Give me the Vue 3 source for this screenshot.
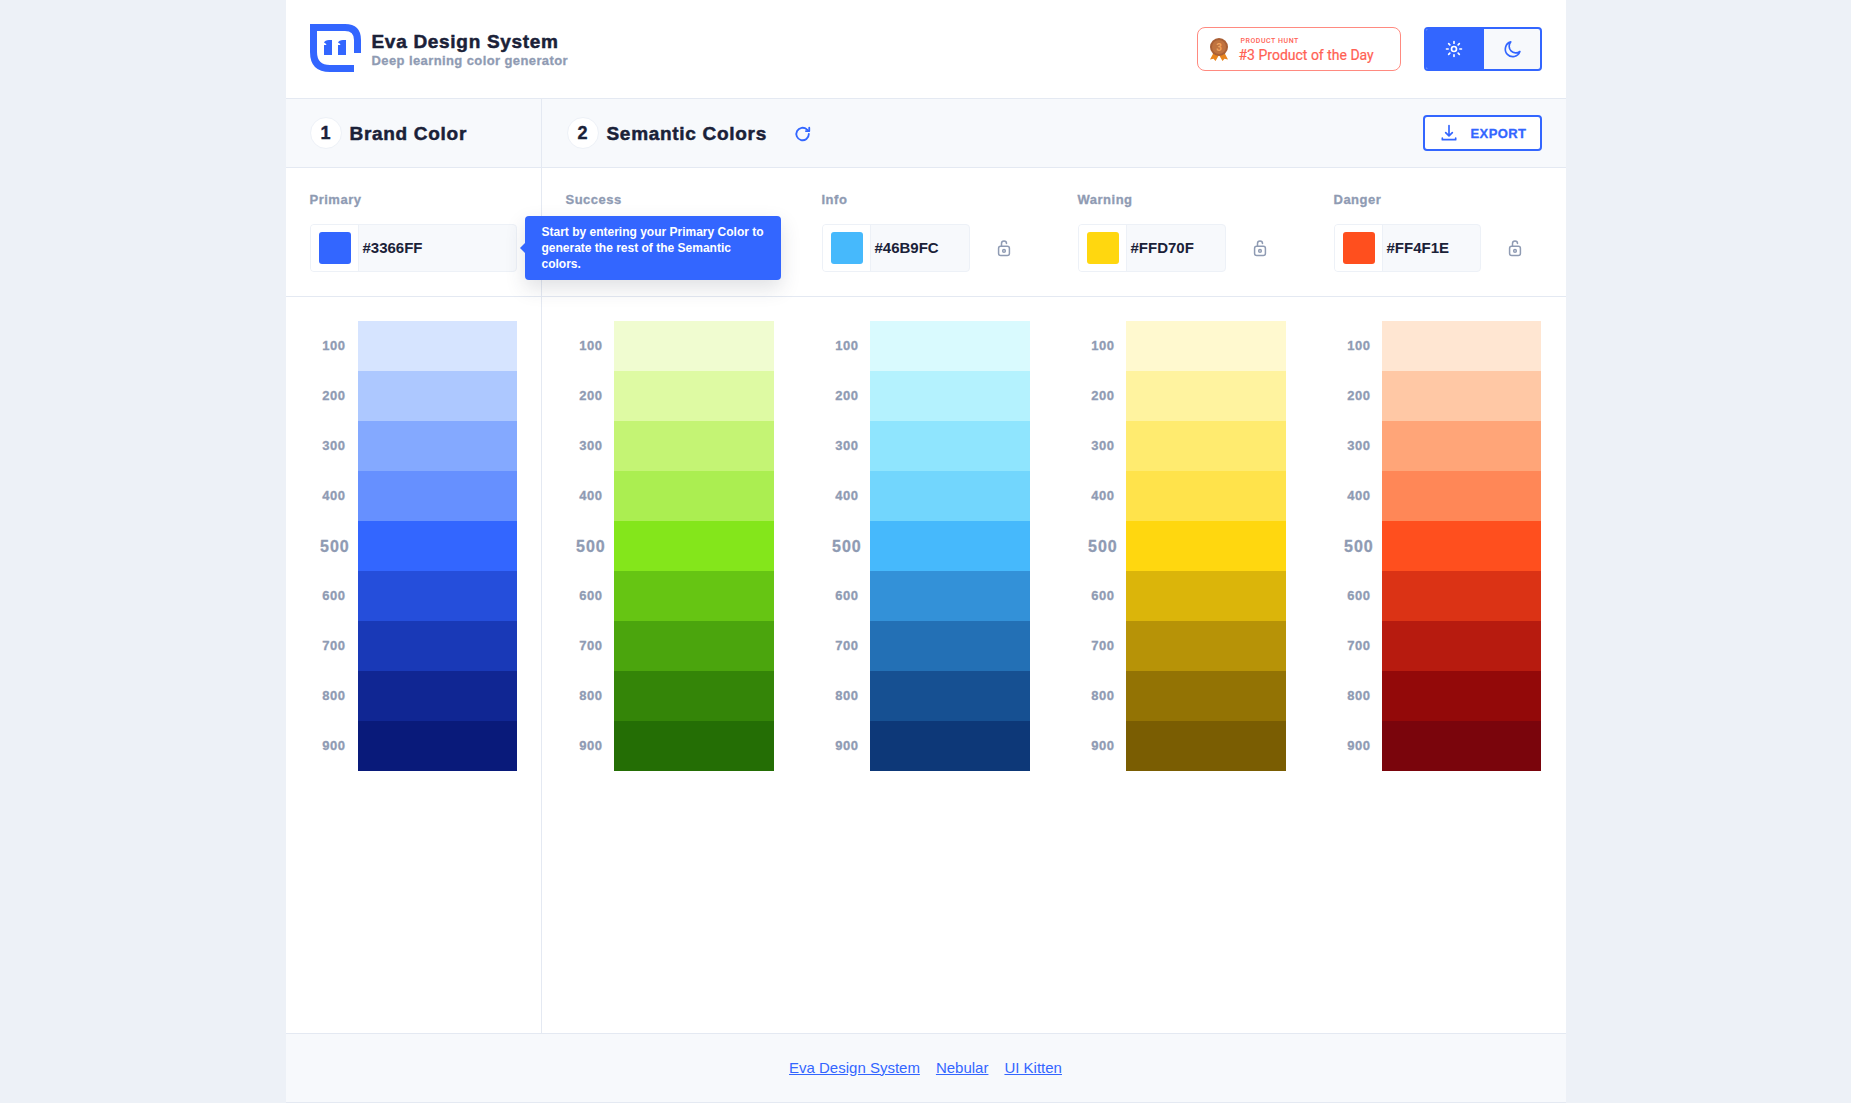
<template>
  <div class="page">
    <header class="top">
      <div class="brand">
        <svg class="logo" viewBox="0 0 51 48">
          <path fill="#3366ff" d="M0 0H35Q51 0 51 16V29H44V16Q44 7 35 7H7V28Q7 41 20 41H44V48H20Q0 48 0 28Z" />
          <path fill="#3366ff" d="M14 18.500Q15 16 19 16H22V31H14V21H16.500Q16.500 19.500 14 18.500ZM28 18.500Q29 16 33 16H36V31H28V21H30.500Q30.500 19.500 28 18.500Z" />
        </svg>
        <div>
          <div class="brand-title">Eva Design System</div>
          <div class="brand-sub">Deep learning color generator</div>
        </div>
      </div>
      <div class="top-right">
        <a class="ph-badge">
          <svg class="medal" viewBox="0 0 18 23">
            <path fill="#e8851e" d="M4 14 0 21.500l3.500-.7L5.500 23 9 17l3.500 6 2-2.200 3.500.7L14 14Z" />
            <circle cx="9" cy="9" r="9" fill="#a95f35" />
            <circle cx="9" cy="9" r="7" fill="#c0733f" />
            <text x="9" y="12.500" text-anchor="middle" class="medal-num">3</text>
          </svg>
          <div class="ph-text">
            <div class="ph-small">PRODUCT HUNT</div>
            <div class="ph-big">#3 Product of the Day</div>
          </div>
        </a>
        <div class="theme-toggle">
          <button class="theme-btn on">
            <svg width="20" height="20" viewBox="0 0 24 24" fill="none" stroke="#fff" stroke-width="2" stroke-linecap="round">
              <circle cx="12" cy="12" r="3" />
              <path d="M12 3v2M12 19v2M3 12h2M19 12h2M5.600 5.600 7 7M17 17l1.400 1.400M5.600 18.400 7 17M17 7l1.400-1.400" />
            </svg>
          </button>
          <button class="theme-btn">
            <svg width="20" height="20" viewBox="0 0 24 24" fill="none" stroke="#3366ff" stroke-width="2" stroke-linejoin="round">
              <path d="M10.500 3.500A9 9 0 1 0 21.500 15 8 8 0 0 1 10.500 3.500Z" />
            </svg>
          </button>
        </div>
      </div>
    </header>

    <div class="main">
      <div class="brand-col">
        <div class="step-head">
          <span class="step-num">1</span>
          <span class="step-title">Brand Color</span>
        </div>
        <div class="inputs-row">
          <div class="field">
            <div class="field-label">Primary</div>
            <div class="color-input">
              <span class="swatch-cell"><span class="swatch" :style="{ background: primary.hex }"></span></span>
              <span class="hex">{{ primary.hex }}</span>
            </div>
            <div class="tip">
              Start by entering your Primary Color to generate the rest of the Semantic colors.
            </div>
          </div>
        </div>
        <div class="palettes">
          <div class="scale">
            <div v-for="(c, i) in primary.shades" :key="c" class="shade-row">
              <span class="shade-num" :class="{ big: i === 4 }">{{ (i + 1) * 100 }}</span>
              <span class="shade" :style="{ background: c }"></span>
            </div>
          </div>
        </div>
      </div>

      <div class="semantic-col">
        <div class="step-head second">
          <span class="step-num">2</span>
          <span class="step-title">Semantic Colors</span>
          <svg class="refresh" width="20" height="20" viewBox="0 0 24 24" fill="none" stroke="#3366ff" stroke-width="2.200" stroke-linecap="round" stroke-linejoin="round">
            <path d="M19 12a7.500 7.500 0 1 1-2.400-5.500L19 8.500" />
            <path d="M19.500 4.500v4h-4" />
          </svg>
          <button class="export">
            <svg width="20" height="20" viewBox="0 0 24 24" fill="none" stroke="#3366ff" stroke-width="2" stroke-linecap="round" stroke-linejoin="round">
              <path d="M12 3v12M8 11.500l4 4 4-4" />
              <path d="M4 18v2h16v-2" />
            </svg>
            EXPORT
          </button>
        </div>
        <div class="inputs-row grid">
          <div v-for="p in semantic" :key="p.name" class="field">
            <div class="field-label">{{ p.name }}</div>
            <div class="field-line">
              <div v-if="p.name !== 'Success'" class="color-input">
                <span class="swatch-cell"><span class="swatch" :style="{ background: p.hex }"></span></span>
                <span class="hex">{{ p.hex }}</span>
              </div>
              <svg v-if="p.name !== 'Success'" class="lock" width="20" height="20" viewBox="0 0 24 24" fill="none" stroke="#8f9bb3" stroke-width="1.800" stroke-linecap="round">
                <rect x="5.500" y="10" width="13" height="11" rx="2.500" />
                <circle cx="12" cy="15.500" r="1.600" />
                <path d="M9 10V6.500a3 3 0 0 1 6 0" />
              </svg>
            </div>
          </div>
        </div>
        <div class="palettes grid semantic-scales">
          <div v-for="p in semantic" :key="p.name" class="scale">
            <div v-for="(c, i) in p.shades" :key="c" class="shade-row">
              <span class="shade-num" :class="{ big: i === 4 }">{{ (i + 1) * 100 }}</span>
              <span class="shade" :style="{ background: c }"></span>
            </div>
          </div>
        </div>
      </div>
    </div>

    <footer class="foot">
      <a>Eva Design System</a>
      <a>Nebular</a>
      <a>UI Kitten</a>
    </footer>
  </div>
</template>

<script setup>
const primary = {
  hex: '#3366FF',
  shades: ['#D6E4FF', '#ADC8FF', '#84A9FF', '#6690FF', '#3366FF', '#254EDB', '#1939B7', '#102693', '#091A7A']
}

const semantic = [
  {
    name: 'Success',
    hex: '#84E61B',
    shades: ['#F0FCD0', '#DEFAA3', '#C4F474', '#ABEE51', '#84E61B', '#66C513', '#4BA50D', '#348508', '#246E05']
  },
  {
    name: 'Info',
    hex: '#46B9FC',
    shades: ['#D9FAFE', '#B4F2FE', '#8FE5FE', '#72D6FD', '#46B9FC', '#3391D8', '#2370B5', '#165092', '#0D3878']
  },
  {
    name: 'Warning',
    hex: '#FFD70F',
    shades: ['#FFF9CF', '#FFF39F', '#FFEB6F', '#FFE34B', '#FFD70F', '#DBB50A', '#B79307', '#937304', '#7A5D02']
  },
  {
    name: 'Danger',
    hex: '#FF4F1E',
    shades: ['#FFE6D2', '#FFC8A5', '#FFA578', '#FF8757', '#FF4F1E', '#DB3315', '#B71B0F', '#930909', '#7A050C']
  }
]
</script>

<style>
body {
  background: #edf1f7;
}
</style>

<style scoped>
.page {
  width: 1280px;
  height: 1103px;
  margin: 0 auto;
  background: #fff;
  display: flex;
  flex-direction: column;
  font-family: "Liberation Sans", Arial, sans-serif;
  color: #1a2138;
}

.top {
  height: 99px;
  flex: none;
  box-sizing: border-box;
  display: flex;
  align-items: center;
  justify-content: space-between;
  padding: 0 24px;
  border-bottom: 1px solid #e4e9f2;
}

.brand {
  display: flex;
  align-items: center;
  gap: 11px;
}

.logo {
  width: 51px;
  height: 48px;
  margin-bottom: 2px;
}

.brand-title {
  font-size: 19px;
  line-height: 22px;
  font-weight: 700;
  letter-spacing: 0.7px;
  -webkit-text-stroke: 0.5px #1a2138;
}

.brand-sub {
  font-size: 13px;
  line-height: 15px;
  font-weight: 700;
  letter-spacing: 0.4px;
  color: #8f9bb3;
  -webkit-text-stroke: 0.3px #8f9bb3;
}

.top-right {
  display: flex;
  align-items: center;
  gap: 23px;
}

.ph-badge {
  width: 204px;
  height: 44px;
  box-sizing: border-box;
  border: 1px solid #ff8a80;
  border-radius: 8px;
  display: flex;
  align-items: center;
  padding-left: 12px;
  gap: 11px;
  color: #ff6154;
  font-family: Roboto, sans-serif;
}

.medal {
  width: 18px;
  height: 23px;
  flex: none;
}

.medal-num {
  font-size: 10px;
  font-weight: 700;
  fill: #f2a35e;
  font-family: Roboto, sans-serif;
}

.ph-text {
  padding-top: 2px;
}

.ph-small {
  font-size: 7px;
  line-height: 9px;
  font-weight: 500;
  letter-spacing: 0.55px;
  padding-left: 2px;
}

.ph-big {
  font-size: 14px;
  line-height: 18px;
  font-weight: 400;
  -webkit-text-stroke: 0.2px #ff6154;
}

.theme-toggle {
  width: 118px;
  height: 44px;
  box-sizing: border-box;
  border: 2px solid #3366ff;
  border-radius: 4px;
  display: flex;
  overflow: hidden;
  background: #f7f9fc;
}

.theme-btn {
  flex: 1;
  border: 0;
  padding: 0;
  background: none;
  display: flex;
  align-items: center;
  justify-content: center;
}

.theme-btn.on {
  flex: none;
  width: 58px;
  padding-right: 2px;
  background: #3366ff;
}

.main {
  flex: 1;
  display: flex;
  min-height: 0;
}

.brand-col {
  width: 256px;
  flex: none;
  box-sizing: border-box;
  border-right: 1px solid #e4e9f2;
}

.semantic-col {
  flex: 1;
  min-width: 0;
}

.step-head {
  height: 69px;
  box-sizing: border-box;
  background: #f7f9fc;
  border-bottom: 1px solid #e4e9f2;
  padding: 0 24px;
  display: flex;
  align-items: center;
}

.step-head.second {
  padding-left: 25px;
}

.step-num {
  width: 32px;
  height: 32px;
  box-sizing: border-box;
  border: 1px solid #edf1f7;
  border-radius: 50%;
  background: #fff;
  display: flex;
  align-items: center;
  justify-content: center;
  font-size: 18px;
  font-weight: 700;
  margin-right: 8px;
  -webkit-text-stroke: 0.4px #1a2138;
}

.step-title {
  font-size: 19px;
  font-weight: 700;
  letter-spacing: 0.7px;
  padding-top: 2px;
  -webkit-text-stroke: 0.5px #1a2138;
}

.refresh {
  margin: 2px 0 0 26px;
}

.export {
  margin-left: auto;
  width: 119px;
  height: 36px;
  box-sizing: border-box;
  border: 2px solid #3366ff;
  border-radius: 4px;
  background: #fff;
  color: #3366ff;
  font-family: "Liberation Sans", Arial, sans-serif;
  font-size: 13px;
  font-weight: 700;
  letter-spacing: 0.4px;
  -webkit-text-stroke: 0.3px #3366ff;
  display: flex;
  align-items: center;
  gap: 12px;
  padding: 0 0 0 14px;
}

.inputs-row {
  height: 129px;
  box-sizing: border-box;
  padding: 24px 24px 0;
  border-bottom: 1px solid #e4e9f2;
}

.grid {
  display: grid;
  grid-template-columns: 208px 208px 208px 207px;
  column-gap: 48px;
}

.field {
  position: relative;
}

.field-label {
  font-size: 13px;
  line-height: 16px;
  font-weight: 700;
  letter-spacing: 0.5px;
  color: #8f9bb3;
  -webkit-text-stroke: 0.3px #8f9bb3;
  margin-bottom: 16px;
}

.field-line {
  display: flex;
  align-items: center;
  height: 48px;
}

.color-input {
  width: 207px;
  height: 48px;
  box-sizing: border-box;
  border: 1px solid #edf1f7;
  border-radius: 4px;
  background: #f7f9fc;
  display: flex;
  align-items: center;
  overflow: hidden;
}

.field-line .color-input {
  width: calc(100% - 60px);
  flex: none;
}

.swatch-cell {
  width: 48px;
  height: 100%;
  flex: none;
  box-sizing: border-box;
  background: #fff;
  border-right: 1px solid #edf1f7;
  padding-left: 8px;
  display: flex;
  align-items: center;
}

.swatch {
  width: 32px;
  height: 32px;
  border-radius: 3px;
}

.hex {
  font-size: 15px;
  font-weight: 700;
  margin-left: 4px;
  padding-bottom: 2px;
}

.lock {
  margin-left: 24px;
}

.tip {
  position: absolute;
  left: 215px;
  top: 24px;
  width: 256px;
  height: 64px;
  box-sizing: border-box;
  padding: 8px 16px 0 17px;
  background: #3366ff;
  border-radius: 4px;
  color: #fff;
  font-size: 12px;
  line-height: 16px;
  font-weight: 700;
  box-shadow: 0 8px 20px rgba(44, 51, 73, 0.15);
  z-index: 2;
}

.tip::before {
  content: "";
  position: absolute;
  left: -5px;
  top: 27px;
  border-top: 5px solid transparent;
  border-bottom: 5px solid transparent;
  border-right: 5px solid #3366ff;
}

.palettes {
  padding: 24px 24px 0;
}

.shade-row {
  display: flex;
  height: 50px;
  align-items: center;
}

.shade-num {
  width: 48px;
  flex: none;
  padding: 0 12px 2px 0;
  box-sizing: border-box;
  text-align: right;
  font-size: 13px;
  font-weight: 700;
  letter-spacing: 0.5px;
  color: #8f9bb3;
  -webkit-text-stroke: 0.3px #8f9bb3;
}

.shade-num.big {
  font-size: 16px;
  letter-spacing: 0.9px;
  padding: 2px 8px 0 0;
}

.semantic-scales .shade-num {
  padding-right: 11px;
}

.semantic-scales .shade-num.big {
  padding-right: 8px;
}

.shade {
  flex: 1;
  height: 100%;
}

.foot {
  flex: none;
  height: 70px;
  box-sizing: border-box;
  background: #f7f9fc;
  border-top: 1px solid #e4e9f2;
  border-bottom: 1px solid #e4e9f2;
  padding-bottom: 2px;
  display: flex;
  align-items: center;
  justify-content: center;
  gap: 16px;
  font-size: 15px;
  color: #3366ff;
}

.foot a {
  text-decoration: underline;
}
</style>
